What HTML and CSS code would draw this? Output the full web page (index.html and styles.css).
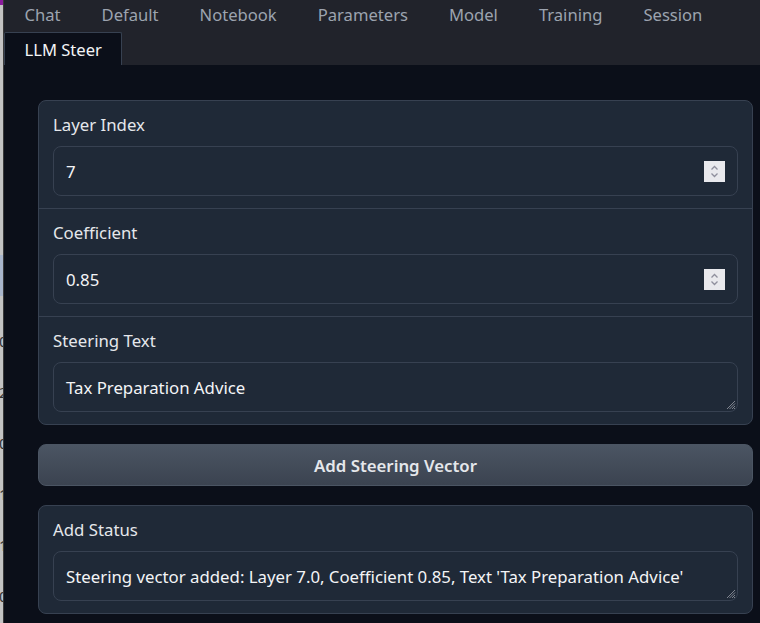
FILE: index.html
```html
<!DOCTYPE html>
<html lang="en">
<head>
<meta charset="utf-8">
<title>LLM Steer</title>
<link rel="stylesheet" href="styles.css">
</head>
<body>
<div class="screen">
  <div class="strip">
    <div class="strip-top"></div>
    <div class="strip-blue"></div>
    <div class="strip-text">
      <span>0</span><span>2</span><span>0</span><span>1</span><span>1</span><span>0</span>
    </div>
  </div>
  <div class="app">
    <nav class="tabs">
      <div class="tab">Chat</div>
      <div class="tab">Default</div>
      <div class="tab">Notebook</div>
      <div class="tab">Parameters</div>
      <div class="tab">Model</div>
      <div class="tab">Training</div>
      <div class="tab">Session</div>
      <div class="tab tab-selected">LLM Steer</div>
    </nav>
    <main class="content">
      <section class="panel">
        <div class="field">
          <div class="label">Layer Index</div>
          <div class="input">
            <span class="value">7</span>
            <span class="spinner">
              <svg width="21" height="21" viewBox="0 0 21 21"><rect width="21" height="21" fill="#e9e9ed"/><path d="M7.5 8.5 L10.5 5.5 L13.5 8.5" fill="none" stroke="#8f8f9d" stroke-width="1.3"/><path d="M7.5 12.5 L10.5 15.5 L13.5 12.5" fill="none" stroke="#8f8f9d" stroke-width="1.3"/></svg>
            </span>
          </div>
        </div>
        <div class="field">
          <div class="label">Coefficient</div>
          <div class="input">
            <span class="value">0.85</span>
            <span class="spinner">
              <svg width="21" height="21" viewBox="0 0 21 21"><rect width="21" height="21" fill="#e9e9ed"/><path d="M7.5 8.5 L10.5 5.5 L13.5 8.5" fill="none" stroke="#8f8f9d" stroke-width="1.3"/><path d="M7.5 12.5 L10.5 15.5 L13.5 12.5" fill="none" stroke="#8f8f9d" stroke-width="1.3"/></svg>
            </span>
          </div>
        </div>
        <div class="field">
          <div class="label">Steering Text</div>
          <div class="input textarea">
            <span class="value">Tax Preparation Advice</span>
            <svg class="grip" width="10" height="10" viewBox="0 0 10 10"><path d="M9 1 L1 9 M9 3.5 L3.5 9 M9 6 L6 9 M9 8 L8 9" stroke="#8a8f99" stroke-width="0.9"/></svg>
          </div>
        </div>
      </section>
      <button class="action">Add Steering Vector</button>
      <section class="panel">
        <div class="field">
          <div class="label">Add Status</div>
          <div class="input textarea">
            <span class="value">Steering vector added: Layer 7.0, Coefficient 0.85, Text 'Tax Preparation Advice'</span>
            <svg class="grip" width="10" height="10" viewBox="0 0 10 10"><path d="M9 1 L1 9 M9 3.5 L3.5 9 M9 6 L6 9 M9 8 L8 9" stroke="#8a8f99" stroke-width="0.9"/></svg>
          </div>
        </div>
      </section>
    </main>
  </div>
</div>
</body>
</html>
```

FILE: styles.css
```css
* { box-sizing: border-box; }
html, body {
  margin: 0;
  padding: 0;
  width: 760px;
  height: 623px;
  overflow: hidden;
  background: #0b0f19;
  font-family: "Noto Sans", "Open Sans", sans-serif;
}
.screen {
  display: flex;
  width: 760px;
  height: 623px;
}
.strip {
  width: 4px;
  flex: none;
  display: flex;
  flex-direction: column;
  background: #c3c3c3;
  border-right: 1px solid #3a3a3a;
  overflow: hidden;
}
.strip-top {
  height: 5px;
  background: #8a1a9c;
  flex: none;
}
.strip-blue {
  height: 41px;
  margin-top: 250px;
  background: #a9b6cc;
  flex: none;
}
.strip-text {
  display: flex;
  flex-direction: column;
  margin-top: 20px;
  margin-left: -1px;
  font-size: 15px;
  line-height: 51px;
  color: #333;
}
.app {
  flex: 1;
  display: flex;
  flex-direction: column;
  min-width: 0;
}
.tabs {
  display: flex;
  flex-wrap: wrap;
  row-gap: 5px;
  background: #21232b;
  padding-bottom: 1px;
}
.tab {
  height: 27px;
  padding: 0 19.5px;
  border: 1px solid transparent;
  border-bottom: none;
  display: flex;
  align-items: center;
  font-size: 16.6px;
  color: #9ca3af;
  white-space: nowrap;
}
.tab-selected {
  height: 33px;
  margin-bottom: -1px;
  background: #0b0f19;
  border-color: #374151;
  border-radius: 2px 2px 0 0;
  color: #f3f4f6;
}
.content {
  flex: 1;
  padding: 35px 7px 0 34px;
  display: flex;
  flex-direction: column;
  gap: 19px;
}
.panel {
  background: #1f2937;
  border: 1px solid #374151;
  border-radius: 8px;
  display: flex;
  flex-direction: column;
}
.field {
  padding: 13px 14px 12px;
  display: flex;
  flex-direction: column;
  gap: 10px;
}
.field + .field {
  border-top: 1px solid #374151;
}
.label {
  font-size: 16.8px;
  line-height: 22px;
  color: #e5e7eb;
}
.input {
  height: 50px;
  border: 1px solid #374151;
  border-radius: 8px;
  background: #1f2937;
  padding: 0 12px;
  display: flex;
  align-items: center;
  justify-content: space-between;
  font-size: 16.8px;
  color: #f3f4f6;
  position: relative;
}
.spinner {
  display: flex;
  width: 21px;
  height: 21px;
}
.grip {
  position: absolute;
  right: 1px;
  bottom: 1px;
}
.action {
  height: 42px;
  border: 1px solid #4b5563;
  border-radius: 8px;
  background: linear-gradient(to bottom, #4b5563, #3b4350);
  color: #e5e7eb;
  font-family: "Noto Sans", "Open Sans", sans-serif;
  font-size: 16.8px;
  font-weight: 600;
  padding: 0;
}
```
